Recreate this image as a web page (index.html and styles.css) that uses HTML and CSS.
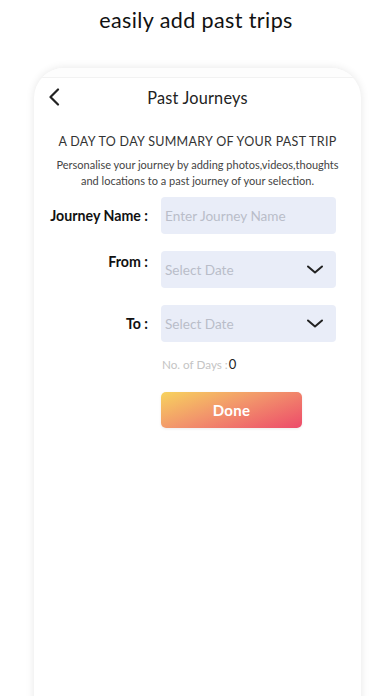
FILE: index.html
```html
<!DOCTYPE html>
<html>
<head>
<meta charset="utf-8">
<link rel="stylesheet" href="styles.css">
</head>
<body>
<div class="page">
  <h1 class="caption">easily add past trips</h1>
  <div class="card">
    <div class="status"></div>
    <div class="navbar">
      <svg class="back" width="12" height="18" viewBox="0 0 12 18"><path d="M10 1.5 L2.5 9 L10 16.5" fill="none" stroke="#222" stroke-width="2.2" stroke-linecap="round" stroke-linejoin="round"/></svg>
      <div class="nav-title">Past Journeys</div>
    </div>
    <h2 class="heading">A DAY TO DAY SUMMARY OF YOUR PAST TRIP</h2>
    <p class="intro">Personalise your journey by adding photos,videos,thoughts<br>and locations to a past journey of your selection.</p>
    <div class="form">
      <label class="label">Journey Name :</label>
      <div class="field"><span class="placeholder">Enter Journey Name</span></div>
      <label class="label label-top">From :</label>
      <div class="field select"><span class="placeholder">Select Date</span>
        <svg class="chev" width="18" height="9" viewBox="0 0 18 9"><path d="M2 1.5 L9 7.5 L16 1.5" fill="none" stroke="#222" stroke-width="2" stroke-linecap="round" stroke-linejoin="round"/></svg>
      </div>
      <label class="label">To :</label>
      <div class="field select"><span class="placeholder">Select Date</span>
        <svg class="chev" width="18" height="9" viewBox="0 0 18 9"><path d="M2 1.5 L9 7.5 L16 1.5" fill="none" stroke="#222" stroke-width="2" stroke-linecap="round" stroke-linejoin="round"/></svg>
      </div>
      <div></div>
      <div class="days">No. of Days :<span class="days-num">0</span></div>
      <div></div>
      <button class="done">Done</button>
    </div>
  </div>
</div>
</body>
</html>
```
FILE: styles.css
```css
* { box-sizing: border-box; }
html, body { margin: 0; padding: 0; background: #fff; }
body { width: 392px; height: 696px; overflow: hidden; font-family: Lato, "Noto Sans", sans-serif; color: #111; }
.page { padding-top: 7px; }
.caption { margin: 0; text-align: center; font-size: 21.5px; font-weight: 400; line-height: 26px; letter-spacing: 0.4px; color: #111; }
.card {
  margin: 35px 0 0 34px;
  width: 327px;
  height: 640px;
  background: #fff;
  border-radius: 30px 30px 0 0;
  box-shadow: 0 0 8px rgba(0,0,0,0.10);
  overflow: hidden;
}
.status { height: 10px; border-bottom: 1px solid #f2f2f2; background: #fdfdfd; }
.navbar { position: relative; height: 38px; display: flex; align-items: center; justify-content: center; }
.back { position: absolute; left: 14px; top: 10px; }
.nav-title { font-size: 16.3px; color: #222; letter-spacing: 0.2px; }
.heading { margin: 18px 0 0; text-align: center; font-size: 12.5px; font-weight: 400; color: #333; letter-spacing: 0.3px; line-height: 16px; }
.intro { margin: 7px 0 0; text-align: center; font-size: 11px; color: #444; line-height: 16px; }
.form {
  margin-top: 8px;
  display: grid;
  grid-template-columns: 1fr 175px;
  column-gap: 13px;
  row-gap: 17px;
  padding-right: 25px;
}
.label { align-self: center; text-align: right; font-size: 14.2px; font-weight: 700; color: #111; }
.label-top { align-self: start; padding-top: 2px; }
.field { height: 37px; background: #e9edf8; border-radius: 4px; display: flex; align-items: center; padding: 0 4px; }
.placeholder { font-size: 13.6px; color: #b9bdc9; }
.select { justify-content: space-between; padding-right: 12px; }
.chev { display: block; }
.days { margin-top: -3px; font-size: 11.7px; color: #c4c4c4; display: flex; align-items: center; padding-left: 1px; }
.days-num { font-size: 13px; color: #222; margin-left: 1px; }
.done {
  margin-top: 3px;
  width: 141px;
  height: 36px;
  border: none;
  border-radius: 5px;
  background: linear-gradient(160deg, #f7d35e 0%, #f2966b 45%, #ed4a6a 100%);
  color: #fff;
  font-family: Lato, "Noto Sans", sans-serif;
  font-size: 15px;
  font-weight: 700;
  letter-spacing: 0.3px;
  box-shadow: 0 1px 3px rgba(0,0,0,0.08);
}
```
